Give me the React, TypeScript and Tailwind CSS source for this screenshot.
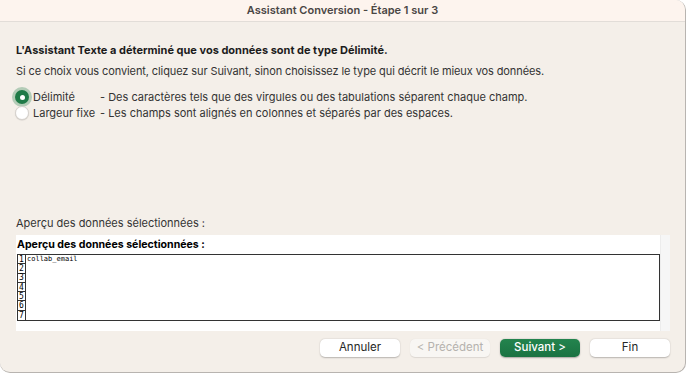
import React, { useState } from 'react';

const rows = [1, 2, 3, 4, 5, 6, 7];

const options = [
  { id: 'delim', label: 'Délimité', desc: '- Des caractères tels que des virgules ou des tabulations séparent chaque champ.' },
  { id: 'fixed', label: 'Largeur fixe', desc: '- Les champs sont alignés en colonnes et séparés par des espaces.' },
];

const App: React.FC = () => {
  const [type, setType] = useState('delim');

  return (
    <div className="w-[688px] h-[374px] bg-white font-['Inter','Liberation_Sans',sans-serif] text-[11px] text-[#2b2b2b]">
      <div className="w-[686px] h-[373px] flex flex-col bg-[#f4efe9] border-r border-b border-[#b8b4b0] rounded-tr-[10px] rounded-b-[10px] overflow-hidden">
        {/* Title bar */}
        <div className="h-[22px] shrink-0 flex items-center justify-center bg-[#fdf4ee] border-b border-[#e2ddd8]">
          <span className="font-semibold text-[11px] text-[#4a4644]">Assistant Conversion - Étape 1 sur 3</span>
        </div>

        <div className="flex-1 flex flex-col px-4">
          <p className="mt-[20px] font-bold text-[#1c1c1c] leading-4">
            L'Assistant Texte a déterminé que vos données sont de type Délimité.
          </p>
          <p className="mt-[5px] leading-4 text-[#333] tracking-[-0.1px]">
            Si ce choix vous convient, cliquez sur Suivant, sinon choisissez le type qui décrit le mieux vos données.
          </p>

          {/* Radios */}
          <div className="mt-[10px] flex flex-col">
            {options.map((o) => (
              <button key={o.id} onClick={() => setType(o.id)} className="flex items-center h-4 text-left whitespace-nowrap">
                {type === o.id ? (
                  <span className="shrink-0 w-[14px] h-[14px] rounded-full bg-[#1f7a47] flex items-center justify-center ring-[3px] ring-[#1f7a47]/30 -ml-px">
                    <span className="w-[5px] h-[5px] rounded-full bg-white" />
                  </span>
                ) : (
                  <span className="shrink-0 w-[14px] h-[14px] rounded-full bg-white border border-[#d6d2cd] shadow-[0_0.5px_1px_rgba(0,0,0,0.15)] -ml-px" />
                )}
                <span className="shrink-0 w-[67px] ml-[4px] text-[#333]">{o.label}</span>
                <span className="text-[#333]">{o.desc}</span>
              </button>
            ))}
          </div>

          <p className="mt-[94px] leading-4 text-[#333]">Aperçu des données sélectionnées :</p>

          {/* Preview box */}
          <div className="mt-[4px] w-[654px] h-[96px] bg-white flex">
            <div className="flex-1 flex flex-col pl-px">
              <div className="h-[19px] flex items-center font-bold text-[10.6px] text-black">Aperçu des données sélectionnées :</div>
              <div className="w-[643px] h-[67px] border-[1.5px] border-[#333] flex font-['DejaVu_Sans_Mono',monospace] text-[7px] leading-[9px]">
                <div className="w-[8px] flex flex-col border-r border-[#333]">
                  {rows.map((r) => (
                    <div key={r} className="h-[9.3px] flex items-center justify-center border-b border-[#333] last:border-b-0 text-black text-[8px]">{r}</div>
                  ))}
                </div>
                <div className="flex-1 pl-px text-black">
                  <div className="h-[9.3px] flex items-center">collab_email</div>
                </div>
              </div>
            </div>
            <div className="w-[10px] bg-[#f6f6f6] border-l border-[#ececec]" />
          </div>

          {/* Buttons */}
          <div className="mt-[8px] -mr-px flex justify-end gap-[10px]">
            <button className="w-[80px] h-[18px] rounded-[5px] bg-white shadow-[0_0.5px_1.5px_rgba(0,0,0,0.25)] text-[#262626] text-[11.5px]">Annuler</button>
            <button disabled className="w-[80px] h-[18px] rounded-[5px] bg-[#f8f6f3] shadow-[0_0.5px_1px_rgba(0,0,0,0.1)] text-[#b5b2ae] text-[11.5px]">&lt; Précédent</button>
            <button className="w-[80px] h-[18px] rounded-[5px] bg-gradient-to-b from-[#23844e] to-[#1a7242] shadow-[0_0.5px_1.5px_rgba(0,0,0,0.3)] text-white font-medium text-[11.5px]">Suivant &gt;</button>
            <button className="w-[80px] h-[18px] rounded-[5px] bg-white shadow-[0_0.5px_1.5px_rgba(0,0,0,0.25)] text-[#262626] text-[11.5px]">Fin</button>
          </div>
        </div>
      </div>
    </div>
  );
};

export default App;
